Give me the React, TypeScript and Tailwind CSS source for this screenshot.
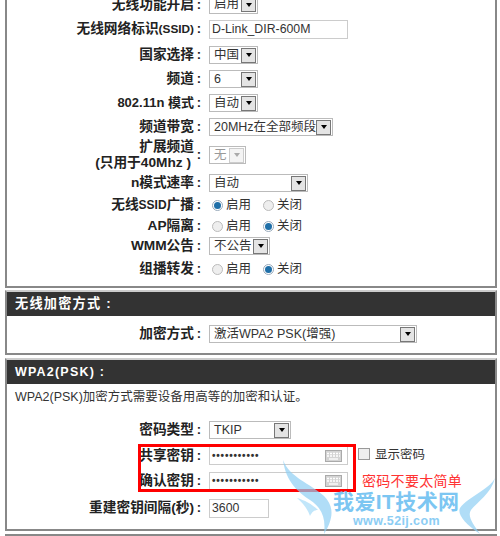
const font = { fontFamily: '"Liberation Sans", "Noto Sans CJK SC", sans-serif' };

function Sel({ text, w, disabled = false }: { text: string; w: string; disabled?: boolean }) {
  return (
    <div className={`${w} flex h-[18px] items-center justify-between border border-[#bbb] bg-white pl-[4px] pr-px text-[12.5px] ${disabled ? "text-[#999]" : "text-[#333]"}`}>
      <span className="whitespace-nowrap leading-none">{text}</span>
      <span className={`flex h-[15px] w-[15px] shrink-0 items-center justify-center border ${disabled ? "border-[#ccc] bg-[#f4f4f4]" : "border-[#777] bg-[#e4e4e4]"}`}>
        <span className={`h-0 w-0 border-x-[3.5px] border-t-[4px] border-x-transparent ${disabled ? "border-t-[#aaa]" : "border-t-black"}`} />
      </span>
    </div>
  );
}

function Radio({ on }: { on: boolean }) {
  return (
    <span className={`flex h-[11px] w-[11px] shrink-0 items-center justify-center rounded-full border ${on ? "border-[#9ab] bg-white" : "border-[#bbb] bg-[#eee]"}`}>
      {on && <span className="h-[7px] w-[7px] rounded-full bg-[#1f6fa8]" />}
    </span>
  );
}

function Radios({ first }: { first: boolean }) {
  return (
    <div className="flex items-center pl-[3px] text-[12.5px] text-[#333]">
      <Radio on={first} />
      <span className="ml-[3px] w-[37px] leading-none">启用</span>
      <Radio on={!first} />
      <span className="ml-[3px] leading-none">关闭</span>
    </div>
  );
}

function Row({ label, h, children }: { label: React.ReactNode; h: string; children: React.ReactNode }) {
  return (
    <div className={`flex items-center ${h}`}>
      <div className="w-[185px] shrink-0 text-right text-[13.7px] font-bold leading-[16px] text-[#222]">{label}</div>
      <span className="w-[10px] text-center text-[13px] font-bold text-[#222]">:</span>
      <div className="ml-[5px] flex items-center">{children}</div>
    </div>
  );
}

function Header({ children, size }: { children: React.ReactNode; size: string }) {
  return (
    <div className={`flex h-[24px] items-center bg-[#333] pl-[8px] ${size} font-bold tracking-[1.2px] text-white`}>{children}</div>
  );
}

function Input({ w, text, dots }: { w: string; text: string; dots?: boolean }) {
  return (
    <div className={`${w} flex h-[19px] items-center justify-between border border-[#ccc] bg-white pl-[2px] pr-[5px] text-[#333] ${dots ? "text-[10px] font-bold tracking-[0.8px]" : "text-[12.3px]"}`}>
      <span className="leading-none">{text}</span>
      {dots && <Keyboard />}
    </div>
  );
}

function Keyboard() {
  return (
    <svg width="17" height="12" viewBox="0 0 17 12">
      <rect x="0.5" y="0.5" width="16" height="11" fill="#d4d4d4" stroke="#aaa" />
      <path d="M2 3.5h13M2 6h13" stroke="#fff" strokeWidth="1.3" strokeDasharray="2 1" />
      <path d="M4 9h9" stroke="#fff" strokeWidth="1.3" />
    </svg>
  );
}

export default function App() {
  return (
    <div style={font} className="relative h-[536px] w-[500px] overflow-hidden bg-white">
      <div className="-mt-[9px] ml-[5px] w-[492px] border-2 border-[#888] pb-[4px] pl-[2px]">
        <Row label="无线功能开启" h="h-[23px]"><Sel text="启用" w="w-[49px]" /></Row>
        <Row label={<>无线网络标识<span className="text-[11.8px]">(SSID)</span></>} h="h-[26px]"><Input w="w-[139px]" text="D-Link_DIR-600M" /></Row>
        <Row label="国家选择" h="h-[26px]"><Sel text="中国" w="w-[49px]" /></Row>
        <Row label="频道" h="h-[22px]"><Sel text="6" w="w-[49px]" /></Row>
        <Row label={<span className="text-[13px]">802.11n 模式</span>} h="h-[26px]"><Sel text="自动" w="w-[49px]" /></Row>
        <Row label="频道带宽" h="h-[22px]"><Sel text="20MHz在全部频段" w="w-[124px]" /></Row>
        <Row label={<>扩展频道<span className="block pr-[3px]">(只用于40Mhz )</span></>} h="h-[34px]"><Sel text="无" w="w-[37px]" disabled /></Row>
        <Row label="n模式速率" h="h-[22px]"><Sel text="自动" w="w-[99px]" /></Row>
        <Row label={<>无线<span className="text-[12px]">SSID</span>广播</>} h="h-[22px]"><Radios first /></Row>
        <Row label="AP隔离" h="h-[20px]"><Radios first={false} /></Row>
        <Row label="WMM公告" h="h-[20px]"><Sel text="不公告" w="w-[61px]" /></Row>
        <Row label="组播转发" h="h-[26px]"><Radios first={false} /></Row>
      </div>

      <div className="ml-[5px] mt-[2px] w-[492px] border-2 border-[#888] border-t-[#ccc]">
        <Header size="text-[13.2px]">无线加密方式 :</Header>
        <div className="pb-[7px] pl-[2px] pt-[6px]">
          <Row label="加密方式" h="h-[24px]"><Sel text="激活WPA2 PSK(增强)" w="w-[208px]" /></Row>
        </div>
      </div>

      <div className="ml-[5px] mt-[3px] w-[492px] border-2 border-[#888] border-t-[#ccc] pb-[7px]">
        <Header size="text-[12.5px]">WPA2(PSK) :</Header>
        <p className="mb-[11px] mt-[4px] pl-[8px] text-[12.5px] leading-[18px] text-[#333]">WPA2(PSK)加密方式需要设备用高等的加密和认证。</p>
        <div className="pl-[2px]">
          <Row label="密码类型" h="h-[26px]"><Sel text="TKIP" w="w-[82px]" /></Row>
          <Row label="共享密钥" h="h-[25px]">
            <Input w="w-[139px]" text="•••••••••••" dots />
            <span className="-mt-[3px] ml-[10px] h-[12px] w-[12px] border border-[#999] bg-[#eee]" />
            <span className="ml-[5px] text-[12.5px] leading-none text-[#333]">显示密码</span>
          </Row>
          <Row label="确认密钥" h="h-[26px]"><Input w="w-[139px]" text="•••••••••••" dots /></Row>
          <Row label="重建密钥间隔(秒)" h="h-[28px]"><Input w="w-[60px]" text="3600" /></Row>
        </div>
      </div>

      <div className="ml-[5px] mt-[3px] h-[2px] w-[492px] bg-[#888]" />

      {/* red annotation */}
      <div className="absolute left-[138px] top-[444px] h-[48px] w-[218px] border-[3px] border-[#f00]" />
      <span className="absolute left-[362px] top-[472px] text-[14px] leading-[18px] tracking-[0.3px] text-[#f33]">密码不要太简单</span>

      {/* watermark */}
      <svg className="absolute left-[280px] top-[458px] opacity-70" width="60" height="78" viewBox="0 0 60 78">
        <path d="M3 2C10 20 30 25 44 38C54 48 54 60 44 76C46 60 42 50 30 42C18 34 6 24 3 2Z" fill="#8fd0f5" />
        <path d="M17 40C24 42 32 46 38 52C34 52 32 54 30 58C28 52 24 46 17 40Z" fill="#a8dcf8" />
      </svg>
      <svg className="absolute left-[455px] top-[476px] opacity-70" width="45" height="60" viewBox="0 0 45 60">
        <path d="M40 2C34 14 14 20 5 32C2 38 10 48 25 58C18 48 12 40 16 34C22 26 36 18 40 2Z" fill="#8fd0f5" />
      </svg>
      <span className="absolute left-[333px] top-[491px] text-[21px] font-bold leading-[22px] tracking-[0.4px] text-[#7cc6f2]">我爱IT技术网</span>
      <span className="absolute left-[353px] top-[514px] text-[12.5px] font-bold leading-[14px] tracking-[0.4px] text-[#8ccdf4]">www.52ij.com</span>
    </div>
  );
}
